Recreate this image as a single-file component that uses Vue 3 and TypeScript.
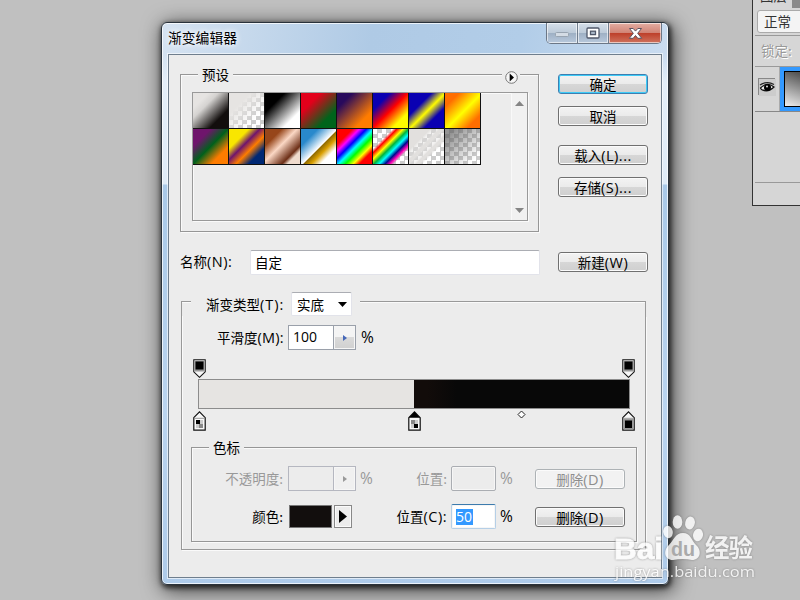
<script setup lang="ts">
interface Preset {
  name: string
  fill: string
  checker?: boolean
}

const presets: Preset[] = [
  { name: 'fg-bg', fill: 'linear-gradient(135deg, #e6e4e2 22%, #d5d3d1 36%, #120e0d 74%)' },
  { name: 'fg-clear', fill: 'linear-gradient(135deg, #e6e4e2 30%, rgba(230,228,226,0) 75%)', checker: true },
  { name: 'black-white', fill: 'linear-gradient(135deg, #000 28%, #fff 76%)' },
  { name: 'red-green', fill: 'linear-gradient(135deg, #e3001b 28%, #00641b 74%)' },
  { name: 'violet-orange', fill: 'linear-gradient(135deg, #280a5c 22%, #ff7c00 76%)' },
  { name: 'blue-red-yellow', fill: 'linear-gradient(135deg, #0a00b2 24%, #ff0000 50%, #fffc00 78%)' },
  { name: 'blue-yellow-blue', fill: 'linear-gradient(135deg, #0a00b2 32%, #fffc00 52%, #0a00b2 72%)' },
  { name: 'orange-yellow', fill: 'linear-gradient(135deg, #ff6e00 20%, #ffff00 53%, #ff6e00 82%)' },
  { name: 'violet-green', fill: 'linear-gradient(135deg, #6f156c 25%, #00601b 50%, #fd7c00 76%)' },
  { name: 'yellow-violet', fill: 'linear-gradient(135deg, #f9e600 28%, #6f156c 44%, #fd7c00 60%, #002874 78%)' },
  { name: 'copper', fill: 'linear-gradient(135deg, #97461a 24%, #fbd8c5 46%, #6c2e16 74%, #efdbcd 82%)' },
  { name: 'chrome', fill: 'linear-gradient(135deg, #2989cc 24%, #fff 52%, #906a00 54%, #d99f00 64%, #fff 78%)' },
  { name: 'spectrum', fill: 'linear-gradient(135deg, #f00 22%, #f0f 32%, #00f 42%, #0ff 52%, #0f0 62%, #ff0 73%, #f00 82%)' },
  { name: 'rainbow', fill: 'linear-gradient(135deg, rgba(255,0,0,0) 28%, #f00 34%, #ff0 43%, #00b43c 51%, #0ff 59%, #000a90 67%, #ff00b4 74%, rgba(255,0,180,0) 80%)', checker: true },
  { name: 'stripes', fill: 'linear-gradient(135deg, #e2e0de 30%, rgba(226,224,222,.4) 36% 40%, #e2e0de 44% 49%, rgba(226,224,222,.4) 53% 56%, #e2e0de 60% 64%, rgba(226,224,222,0) 70%)', checker: true },
  { name: 'neutral', fill: 'linear-gradient(135deg, rgba(90,90,90,.65) 15%, rgba(120,120,120,0) 85%)', checker: true },
]

const opacityStops = [0, 100]
const colorStops = [
  { at: 0, kind: 'light', active: false },
  { at: 50.1, kind: 'mixed', active: true },
  { at: 100, kind: 'black', active: false },
]
const midpoint = 75
</script>

<template>
  <div class="desktop">
    <aside class="layers">
      <div class="tabs"><span class="tab">图层</span></div>
      <div class="blend"><span class="mode">正常</span></div>
      <div class="lock">锁定:</div>
      <div class="layer">
        <div class="eye">
          <svg width="17" height="17" viewBox="0 0 17 17">
            <path d="M1.5 9Q8 2.5 15 8Q9 14 2.5 10.5Z" fill="#eee" stroke="#111" stroke-width="1.2" />
            <path d="M1 6Q8 1.5 15 5.5" fill="none" stroke="#222" stroke-width="1.3" />
            <circle cx="8.5" cy="8.5" r="3.5" fill="#000" />
            <circle cx="8" cy="7.5" r="1" fill="#ddd" />
          </svg>
        </div>
        <div class="thumb-wrap"><div class="thumb"></div></div>
      </div>
      <div class="layer-space"></div>
    </aside>

    <section class="dialog">
      <header class="title-bar">
        <h1>渐变编辑器</h1>
        <div class="controls">
          <span class="ctl"><svg width="14" height="6"><rect x=".5" y=".5" width="13" height="4" rx="1" fill="#d4dce5" stroke="#98a4b1" /></svg></span>
          <span class="ctl"><svg width="14" height="12"><rect x="1" y="1" width="12" height="10" rx="1" fill="#fff" stroke="#50586a" stroke-width="1.3" /><rect x="4.5" y="4.2" width="5" height="3.4" fill="#a9b8c8" stroke="#50586a" stroke-width="1.3" /></svg></span>
          <span class="ctl close"><svg width="15" height="13" viewBox="0 0 15 13"><path d="M1.5 1.5h3.7l2.3 2.6 2.3-2.6h3.7L9.7 6.3l4 5H9.8L7.5 8.5l-2.3 2.8H1.3l4-5Z" fill="#fff" stroke="#5d5360" stroke-width="1" /></svg></span>
        </div>
      </header>

      <main class="client">
        <div class="upper">
          <fieldset class="box presets">
            <legend>预设</legend>
            <span class="flyout"><svg width="13" height="13"><circle cx="6.5" cy="6.5" r="5.8" fill="#f7f7f7" stroke="#777" /><path d="M4.7 2.5v8l4.3-4Z" fill="#000" /></svg></span>
            <div class="list">
              <div class="grid">
                <div v-for="p in presets" :key="p.name" class="cell" :class="{ checker: p.checker }">
                  <div class="fill" :style="{ background: p.fill }"></div>
                </div>
              </div>
              <div class="scroll">
                <svg width="9" height="5"><path d="M0 5L4.5 0 9 5Z" fill="#858585" /></svg>
                <svg width="9" height="5"><path d="M0 0L4.5 5 9 0Z" fill="#858585" /></svg>
              </div>
            </div>
          </fieldset>
          <div class="actions">
            <button class="btn primary">确定</button>
            <button class="btn">取消</button>
            <button class="btn gap">载入<i>(L)...</i></button>
            <button class="btn">存储<i>(S)...</i></button>
          </div>
        </div>

        <div class="name-row">
          <label>名称<i>(N):</i></label>
          <div class="name">自定</div>
          <button class="btn">新建<i>(W)</i></button>
        </div>

        <div class="type-group">
          <div class="type-row">
            <span class="rule lead"></span>
            <label>渐变类型<i>(T):</i></label>
            <div class="select">实底<svg width="9" height="5"><path d="M0 0h9L4.5 5Z" fill="#000" /></svg></div>
            <span class="rule tail"></span>
          </div>
          <div class="type-body">
            <div class="smooth-row">
              <label>平滑度<i>(M):</i></label>
              <div class="spin"><span>100</span><b><svg width="4" height="6"><path d="M0 0v6L4 3Z" fill="#4667b8" /></svg></b></div>
              <i class="sign">%</i>
            </div>

            <div class="ramp">
              <div class="stops">
                <svg v-for="s in opacityStops" :key="s" class="stop" :style="{ left: s + '%' }" width="13" height="19" viewBox="0 0 13 19">
                  <path d="M.8 .8h11.4v12L6.5 18.3.8 12.8Z" fill="#f8f8f8" stroke="#111" stroke-width="1.1" />
                  <rect x="1.5" y="1.5" width="10" height="11" fill="#999" />
                  <rect x="2.5" y="2.5" width="8" height="8" fill="#000" />
                </svg>
              </div>
              <div class="bar"></div>
              <div class="stops lower">
                <svg v-for="s in colorStops" :key="s.at" class="stop" :style="{ left: s.at + '%' }" width="13" height="20" viewBox="0 0 13 20">
                  <path d="M.8 6.7L6.5 .9l5.7 5.8v12.4H.8Z" fill="#f8f8f8" stroke="#111" stroke-width="1.2" />
                  <path v-if="s.active" d="M.8 6.8L6.5 .8l5.7 6Z" fill="#000" />
                  <path v-else d="M1 7.3h11" stroke="#999" />
                  <template v-if="s.kind === 'black'">
                    <rect x="1.7" y="8" width="9.6" height="10.4" fill="#999" />
                    <rect x="3" y="9.5" width="7" height="7.5" fill="#000" />
                  </template>
                  <template v-else>
                    <rect x="3" y="9" width="7" height="8" fill="#ccc" />
                    <rect :x="s.kind === 'light' ? 3 : 6" :y="s.kind === 'light' ? 9 : 13" width="4" height="4" fill="#000" />
                    <rect :x="s.kind === 'light' ? 6 : 3" :y="s.kind === 'light' ? 13 : 9" width="4" height="4" fill="#888" />
                  </template>
                </svg>
                <svg class="mid" :style="{ left: midpoint + '%' }" width="9" height="9"><path d="M4.5 1L8 4.5 4.5 8 1 4.5Z" fill="#fff" stroke="#222" /></svg>
              </div>
            </div>

            <fieldset class="box stop-box">
              <legend>色标</legend>
              <div class="fields first dim">
                <label>不透明度:</label>
                <div class="spin"><span></span><b><svg width="4" height="6"><path d="M0 0v6L4 3Z" fill="#999" /></svg></b></div>
                <i class="pct">%</i>
                <label class="pos">位置:</label>
                <div class="num"></div>
                <i class="pct">%</i>
                <button class="btn" disabled>删除<i>(D)</i></button>
              </div>
              <div class="fields">
                <label>颜色:</label>
                <div class="color"><span class="chip"></span><span class="pick"><svg width="8" height="13"><path d="M0 0v13L8 6.5Z" fill="#000" /></svg></span></div>
                <i class="pct"></i>
                <label class="pos">位置<i>(C):</i></label>
                <div class="num focus"><mark>50</mark></div>
                <i class="pct">%</i>
                <button class="btn">删除<i>(D)</i></button>
              </div>
            </fieldset>
          </div>
        </div>
      </main>
    </section>

    <svg class="watermark" width="150" height="76" viewBox="0 0 150 76">
      <g class="mark-shape">
        <text class="latin brand" x="4" y="45" font-size="30" textLength="49" lengthAdjust="spacingAndGlyphs">Bai</text>
        <ellipse cx="58" cy="18" rx="4.8" ry="6.2" transform="rotate(-12 58 18)" />
        <ellipse cx="67.5" cy="8" rx="4.8" ry="6.8" />
        <ellipse cx="80" cy="9" rx="4.8" ry="6.5" transform="rotate(12 80 9)" />
        <ellipse cx="88" cy="21" rx="5" ry="6.3" transform="rotate(12 88 21)" />
        <path d="M73 19C65 19 64 26 59 31C53 36 54 46 63 46Q73 44 82 46C91 46 92 36 86 31C81 26 81 19 73 19Z" />
        <text class="cjk" x="95" y="43" font-size="24.5" textLength="48">经验</text>
        <text class="url" x="5" y="63" font-size="14.5" textLength="140" lengthAdjust="spacingAndGlyphs">jingyan.baidu.com</text>
      </g>
      <text class="latin" x="61" y="42" font-size="20" fill="#aaa" textLength="24" lengthAdjust="spacingAndGlyphs">du</text>
    </svg>
  </div>
</template>

<style>
body { margin: 0; }
</style>

<style scoped>
* { box-sizing: border-box; }
.desktop {
  position: relative; width: 800px; height: 600px; overflow: hidden; background: #c0c0c0;
  font: 13.5px/18px "Noto Sans CJK SC", sans-serif; color: #000;
}
i { font-style: normal; font-family: "Open Sans", sans-serif; font-size: 14.5px; letter-spacing: .5px; line-height: 16px; }
svg { display: block; }
label { white-space: nowrap; }

.layers {
  position: absolute; left: 752px; top: -12px; width: 60px; height: 218px;
  background: #d6d6d6; border: 1px solid #333; padding-left: 2px;
}
.tabs { height: 19px; background: linear-gradient(90deg, #d6d6d6 37px, #8a8a8a 37px); overflow: hidden; }
.tab { display: block; padding-left: 5px; line-height: 12px; color: #333; }
.blend { height: 28px; padding: 2px 0 2px 2px; border-bottom: 1px solid #999; }
.mode { display: block; height: 23px; border: 1px solid #aaa; border-radius: 3px; background: #f4f4f4; padding-left: 6px; line-height: 21px; color: #333; }
.lock { height: 31px; border-bottom: 1px solid #999; padding-left: 6px; line-height: 29px; color: #999; text-shadow: 1px 1px #fff; }
.layer { display: flex; height: 45px; border-bottom: 1px solid #888; }
.eye { width: 25px; padding: 12px 0 0 4px; border-right: 1px solid #aaa; }
.eye svg { box-shadow: -1px -1px #888; background: #ccc; }
.thumb-wrap { flex: 1; background: #3399ff; padding: 4px; }
.thumb { height: 36px; border: 1px solid #000; background: linear-gradient(20deg, #eee, #555 90%); }
.layer-space { height: 71px; border-bottom: 1px solid #999; }

.dialog {
  position: absolute; left: 161px; top: 22px; width: 508px; height: 563px;
  border: 1px solid #29323b; border-radius: 6px; padding: 0 6px 6px;
  background: linear-gradient(180deg, transparent 32px, #e4eef8 60px, #dfebf7 161px, #a9c9e8 162px, #bad4ef 390px, #aecbea),
    linear-gradient(100deg, #d6e3f1, #afcae5 35%, #b2cde8 60%, #cadcf0 85%, #c3d8ee);
  box-shadow: inset 0 0 0 1px rgba(255,255,255,.75), 1px 2px 5px 1px rgba(0,0,0,.65), 3px 4px 20px 2px rgba(0,0,0,.65);
}
.title-bar { display: flex; justify-content: space-between; height: 31px; }
h1 { margin: 0; font-size: 13.8px; line-height: 28px; font-weight: 400; text-shadow: 0 0 5px #fff, 0 0 7px #fff; }
.controls { display: flex; width: 116px; height: 21px; border: 1px solid #6c7786; border-top: 0; border-radius: 0 0 5px 5px; overflow: hidden; }
.ctl { width: 31px; display: flex; align-items: center; justify-content: center; border-right: 1px solid #707d8d; background: linear-gradient(#d5dfe9, #bdcbd9 48%, #9eb0c4 50%, #b8c9dc); box-shadow: inset 0 0 0 1px rgba(255,255,255,.6); }
.ctl:first-child svg { margin-top: 4px; }
.close { flex: 1; border: 0; background: linear-gradient(#e4aea3, #d18476 48%, #bd3e29 50%, #cf735e); }

.client { height: 524px; border: 1px solid #6f7e8d; background: #ececec; box-shadow: 0 0 0 1px rgba(255,255,255,.6); padding: 19px 13px 0 11px; }
.upper { display: flex; gap: 19px; }
.box { border: 1px solid #969696; box-shadow: 1px 1px #fafafa, inset 1px 1px #fafafa; margin: 0; padding: 0; min-width: 0; }
.box legend { float: left; width: auto; background: #ececec; padding: 0 4px; line-height: 16px; height: 18px; }
.presets { position: relative; width: 359px; height: 158px; }
.presets legend { margin: -9px 0 8px 17px; }
.flyout { position: absolute; left: 321px; top: -4px; width: 18px; padding-left: 3px; background: #ececec; }
.list { clear: both; display: flex; justify-content: space-between; width: 336px; height: 129px; margin-left: 11px; border: 1px solid #999; box-shadow: 1px 1px #fafafa, inset 1px 1px #fafafa; }
.grid { display: grid; grid-template-columns: repeat(8, 36px); grid-auto-rows: 36px; width: 288px; height: 72px; }
.cell { border-right: 1px solid #111; border-bottom: 1px solid #111; }
.checker { background: conic-gradient(#ccc 25%, #fff 0 50%, #ccc 0 75%, #fff 0) 0 0 / 9px 9px; }
.fill { width: 100%; height: 100%; }
.scroll { width: 16px; display: flex; flex-direction: column; justify-content: space-between; align-items: center; padding: 8px 0 7px; background: #f1f1f1; border-left: 1px solid #f9f9f9; }

.btn {
  display: block; width: 90px; height: 20px; margin: 0; padding: 1px 0 0; border: 1px solid #707070; border-radius: 3px;
  background: linear-gradient(#f3f3f3, #ebebeb 48%, #d7d7d7 50%, #cfcfcf); box-shadow: inset 0 0 0 1px #fbfbfb;
  font: inherit; line-height: 17px; color: #000; text-align: center; white-space: nowrap;
}
.btn.primary { border-color: #3c7fb1; box-shadow: inset 0 0 0 1px #3ecbf7; }
.btn:disabled { border-color: #adb2b5; background: #f2f2f2; color: #8d8d8d; }
.actions { display: flex; flex-direction: column; gap: 12px; }
.gap { margin-top: 7px; }

.name-row { display: flex; align-items: center; height: 25px; margin-top: 18px; }
.name-row label { width: 70px; margin-top: -3px; }
.name-row .btn { margin-top: -1px; }
.name { width: 290px; height: 25px; margin-right: 18px; padding-left: 4px; line-height: 22px; background: #fff; border: 1px solid #e2e3ea; border-top-color: #abadb3; border-radius: 2px; }

.type-group { width: 465px; margin: 17px 0 0 1px; }
.type-row { display: flex; align-items: flex-start; height: 24px; }
.type-row label { width: 85px; margin-top: 3px; }
.type-row i { letter-spacing: 1px; }
.rule { height: 15px; margin-top: 9px; border-top: 1px solid #999; box-shadow: inset 0 1px #fafafa; }
.lead { width: 10px; margin-right: 15px; border-left: 1px solid #999; }
.tail { flex: 1; margin-left: 8px; border-right: 1px solid #999; }
.select { display: flex; align-items: center; justify-content: space-between; width: 61px; height: 24px; padding: 0 4px 0 5px; background: #fff; border: 1px solid #e2e3ea; border-top-color: #abadb3; border-radius: 2px; }
.type-body { height: 234px; padding: 9px 8px 0 9px; border: 1px solid #999; border-top: 0; box-shadow: 1px 1px #fafafa, inset 1px 0 #fafafa; }
.smooth-row { display: flex; align-items: center; height: 25px; }
.smooth-row label { width: 71px; margin: -2px 0 0 26px; }
.smooth-row label i { letter-spacing: .2px; }
.spin { display: flex; width: 68px; height: 25px; border: 1px solid #9aa0aa; background: #fff; }
.spin span { width: 44px; padding-left: 4px; font: 14px/22px "Open Sans", sans-serif; }
.spin b { flex: 1; display: flex; align-items: center; justify-content: center; border-left: 1px solid #9aa0aa; background: linear-gradient(#f4f4f4 48%, #dadada 50%, #d0d0d0); box-shadow: inset 0 0 0 1px #f6f6f6; }
.sign { margin-left: 5px; }
.sign, .pct { font-size: 15.5px; letter-spacing: 0; padding-bottom: 1px; }

.ramp { width: 432px; margin: 9px 0 0 7px; }
.stops { position: relative; height: 20px; margin: 0 2px 0 1px; }
.stop { position: absolute; top: 0; margin-left: -6px; }
.lower .stop { top: 2px; }
.mid { position: absolute; top: 1px; margin-left: -4px; }
.bar { height: 30px; border: 1px solid #8c8c8c; background: linear-gradient(90deg, #e6e4e2 50%, #120c0a 50%, #120c0a 53%, #080808 60%); }

.stop-box { width: 446px; height: 95px; margin-top: 18px; }
.stop-box legend { margin: -9px 0 9px 17px; }
.fields { display: flex; align-items: center; height: 25px; margin-top: 13px; }
.first { clear: both; margin-top: 0; }
.fields > label { width: 96px; padding: 0 5px 2px 0; text-align: right; }
.fields > label.pos { width: 73px; padding-right: 4px; }
.pct { width: 22px; padding-left: 4px; }
.num { width: 45px; height: 25px; padding: 4px; border: 1px solid #aaadb2; border-radius: 2px; box-shadow: inset 0 0 0 1px #f6f6f6; }
.num.focus { background: #fff; border-color: #b5cfe7; border-top-color: #3d7bad; }
mark { display: block; width: 17px; height: 16px; background: #3399ff; color: #fff; font: 14px/15px "Open Sans", sans-serif; }
.num + .pct { width: 39px; }
.dim { color: #999; }
.dim .spin { background: #ececec; border-color: #b5b7c0; }
.dim .spin b { background: #f0f0f0; border-color: #b5b7c0; }
.color { display: flex; gap: 2px; width: 68px; padding-left: 1px; }
.chip { width: 43px; height: 23px; background: #120e0d; border: 1px solid #777; }
.pick { display: flex; align-items: center; justify-content: center; width: 18px; height: 23px; border: 1px solid #888; box-shadow: inset 0 0 0 1px #fafafa; }

.watermark { position: absolute; left: 610px; top: 514px; overflow: visible; }
.mark-shape { fill: #fff; opacity: .8; filter: drop-shadow(0 0 1.2px rgba(90,90,90,.7)); }
.brand { stroke: #fff; stroke-width: .8px; }
.latin { font-family: "Liberation Sans", sans-serif; font-weight: 700; }
.cjk { font-family: "Noto Sans CJK SC", sans-serif; font-weight: 700; }
.url { font-family: "Open Sans", sans-serif; }
</style>
